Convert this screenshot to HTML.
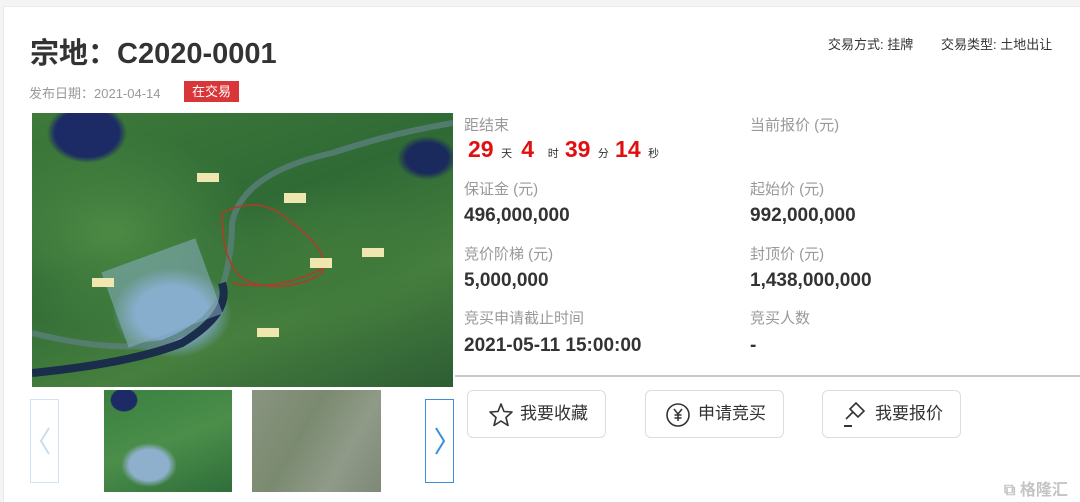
<!DOCTYPE html>
<html><head><meta charset="utf-8">
<style>
*{margin:0;padding:0;box-sizing:border-box}
body{width:1080px;height:502px;background:#f4f4f4;font-family:"Liberation Sans","Noto Sans CJK SC",sans-serif;position:relative;overflow:hidden}
.card{position:absolute;left:3px;top:6px;width:1077px;height:496px;background:#fff;border-left:1px solid #e8e8e8;border-top:1px solid #ececec}
.abs{position:absolute;white-space:nowrap}
.title{left:30px;top:30px;font-size:29px;font-weight:bold;color:#333;letter-spacing:0}
.date{left:29px;top:83px;font-size:13px;color:#999}
.tag{left:184px;top:81px;width:55px;height:21px;background:#d9363a;color:#fff;font-size:13px;line-height:21px;text-align:center}
.meta{top:34px;font-size:13px;color:#333}
.lbl{font-size:15px;color:#999}
.val{font-size:19px;font-weight:bold;color:#333}
.red{color:#e01010;font-size:23px;font-weight:bold}
.unit{font-size:11px;color:#333}
.main{left:32px;top:113px;width:421px;height:274px;overflow:hidden;
background:
radial-gradient(ellipse 40px 30px at 55px 20px,#1c2a66 80%,transparent 100%),
radial-gradient(ellipse 30px 22px at 395px 45px,#1b2a5c 70%,transparent 100%),
radial-gradient(ellipse 60px 45px at 140px 200px,#7fa8c8 60%,transparent 100%),
radial-gradient(ellipse 120px 80px at 300px 150px,#3f7a3a,transparent),
radial-gradient(ellipse 150px 100px at 80px 120px,#4c8a44,transparent),
linear-gradient(160deg,#3e7a3a,#2f6a35 40%,#467f3e 70%,#2d5d34);}
.thumb{top:390px;width:128px;height:102px}
.arrow{top:399px;width:29px;height:84px;border:1px solid #cfe3f3;background:#fff}
.btn{top:390px;width:139px;height:48px;border:1px solid #ddd;border-radius:6px;background:#fff;font-size:17px;color:#333;line-height:46px}
</style></head><body>
<div class="card"></div>
<div class="abs title">宗地：C2020-0001</div>
<div class="abs date">发布日期：2021-04-14</div>
<div class="abs tag">在交易</div>
<div class="abs meta" style="left:828px">交易方式: 挂牌</div>
<div class="abs meta" style="left:941px">交易类型: 土地出让</div>

<div class="abs main">
<svg width="421" height="274" style="position:absolute;left:0;top:0">
<path d="M0 220 Q80 240 130 230 Q170 215 185 190 Q200 150 200 110 Q210 60 300 40 Q360 20 421 10" stroke="#5a7f7a" stroke-width="6" fill="none" opacity=".8"/>
<path d="M0 260 Q100 250 150 230 Q200 200 190 170" stroke="#1a2d4a" stroke-width="8" fill="none"/>
<path d="M190 100 Q230 80 260 110 Q300 140 290 160 Q260 180 220 170 Q190 160 190 100Z" stroke="#b33a2a" stroke-width="1.5" fill="none"/>
<path d="M200 170 Q250 180 300 150" stroke="#b33a2a" stroke-width="1.5" fill="none"/>
<rect x="80" y="140" width="100" height="80" fill="#8fb3cf" opacity=".5" transform="rotate(-20 130 180)"/>
<rect x="252" y="80" width="22" height="10" fill="#f0e6b0"/><rect x="278" y="145" width="22" height="10" fill="#f0e6b0"/>
<rect x="165" y="60" width="22" height="9" fill="#f0e6b0"/><rect x="225" y="215" width="22" height="9" fill="#f0e6b0"/>
<rect x="60" y="165" width="22" height="9" fill="#f0e6b0"/><rect x="330" y="135" width="22" height="9" fill="#f0e6b0"/>
</svg></div>

<div class="abs arrow" style="left:30px"><svg width="27" height="82"><path d="M18 28 L10 41 L18 54" stroke="#c7ddf0" stroke-width="2" fill="none"/></svg></div>
<div class="abs thumb" style="left:104px;background:radial-gradient(ellipse 14px 12px at 20px 10px,#1c2a66 90%,transparent),radial-gradient(ellipse 28px 22px at 45px 75px,#8fb0cc 70%,transparent),linear-gradient(160deg,#3a8040,#4b8e4a 50%,#2f6e3a)"></div>
<div class="abs thumb" style="left:252px;width:129px;background:linear-gradient(120deg,#8a9480,#7a8a70 40%,#909a88 70%,#7d8876)"></div>
<div class="abs arrow" style="left:425px;border-color:#3a8fd8"><svg width="27" height="82"><path d="M10 28 L18 41 L10 54" stroke="#3a8fd8" stroke-width="2" fill="none"/></svg></div>

<div class="abs lbl" style="left:464px;top:114px">距结束</div>
<div class="abs" style="left:468px;top:136px"><span class="red">29</span> <span class="unit">&nbsp;天&nbsp;&nbsp;&nbsp;</span><span class="red">4</span> <span class="unit">&nbsp;&nbsp;&nbsp;时&nbsp;&nbsp;</span><span class="red">39</span> <span class="unit">&nbsp;分&nbsp;&nbsp;</span><span class="red">14</span> <span class="unit">&nbsp;秒</span></div>
<div class="abs lbl" style="left:750px;top:114px">当前报价 (元)</div>
<div class="abs lbl" style="left:464px;top:178px">保证金 (元)</div>
<div class="abs val" style="left:464px;top:205px">496,000,000</div>
<div class="abs lbl" style="left:750px;top:178px">起始价 (元)</div>
<div class="abs val" style="left:750px;top:205px">992,000,000</div>
<div class="abs lbl" style="left:464px;top:243px">竞价阶梯 (元)</div>
<div class="abs val" style="left:464px;top:270px">5,000,000</div>
<div class="abs lbl" style="left:750px;top:243px">封顶价 (元)</div>
<div class="abs val" style="left:750px;top:270px">1,438,000,000</div>
<div class="abs lbl" style="left:464px;top:307px">竞买申请截止时间</div>
<div class="abs val" style="left:464px;top:335px">2021-05-11 15:00:00</div>
<div class="abs lbl" style="left:750px;top:307px">竞买人数</div>
<div class="abs val" style="left:750px;top:335px">-</div>
<div class="abs" style="left:455px;top:375px;width:625px;height:2px;background:#c8c8c8"></div>

<div class="abs btn" style="left:467px"><svg width="26" height="26" style="position:absolute;left:20px;top:11px"><path d="M13 2 L16 9.5 L24 10 L18 15.5 L20 23.5 L13 19 L6 23.5 L8 15.5 L2 10 L10 9.5Z" stroke="#333" stroke-width="1.6" fill="none" stroke-linejoin="round"/></svg><span style="position:absolute;left:52px">我要收藏</span></div>
<div class="abs btn" style="left:645px"><svg width="26" height="26" style="position:absolute;left:19px;top:11px"><circle cx="13" cy="13" r="11" stroke="#333" stroke-width="1.6" fill="none"/><path d="M9 7 L13 12 L17 7 M13 12 V19 M9.5 13 H16.5 M9.5 16 H16.5" stroke="#333" stroke-width="1.5" fill="none"/></svg><span style="position:absolute;left:52px">申请竞买</span></div>
<div class="abs btn" style="left:822px"><svg width="26" height="28" style="position:absolute;left:18px;top:10px"><path d="M9 8 L15 2 L23 10 L17 16Z M12 11 L5 18" stroke="#333" stroke-width="1.6" fill="none"/><path d="M3 25 H11" stroke="#333" stroke-width="2"/></svg><span style="position:absolute;left:52px">我要报价</span></div>

<div class="abs" style="left:1004px;top:476px;font-size:16px;color:#c4c4c4;font-weight:bold">⧉ 格隆汇</div>
</body></html>
